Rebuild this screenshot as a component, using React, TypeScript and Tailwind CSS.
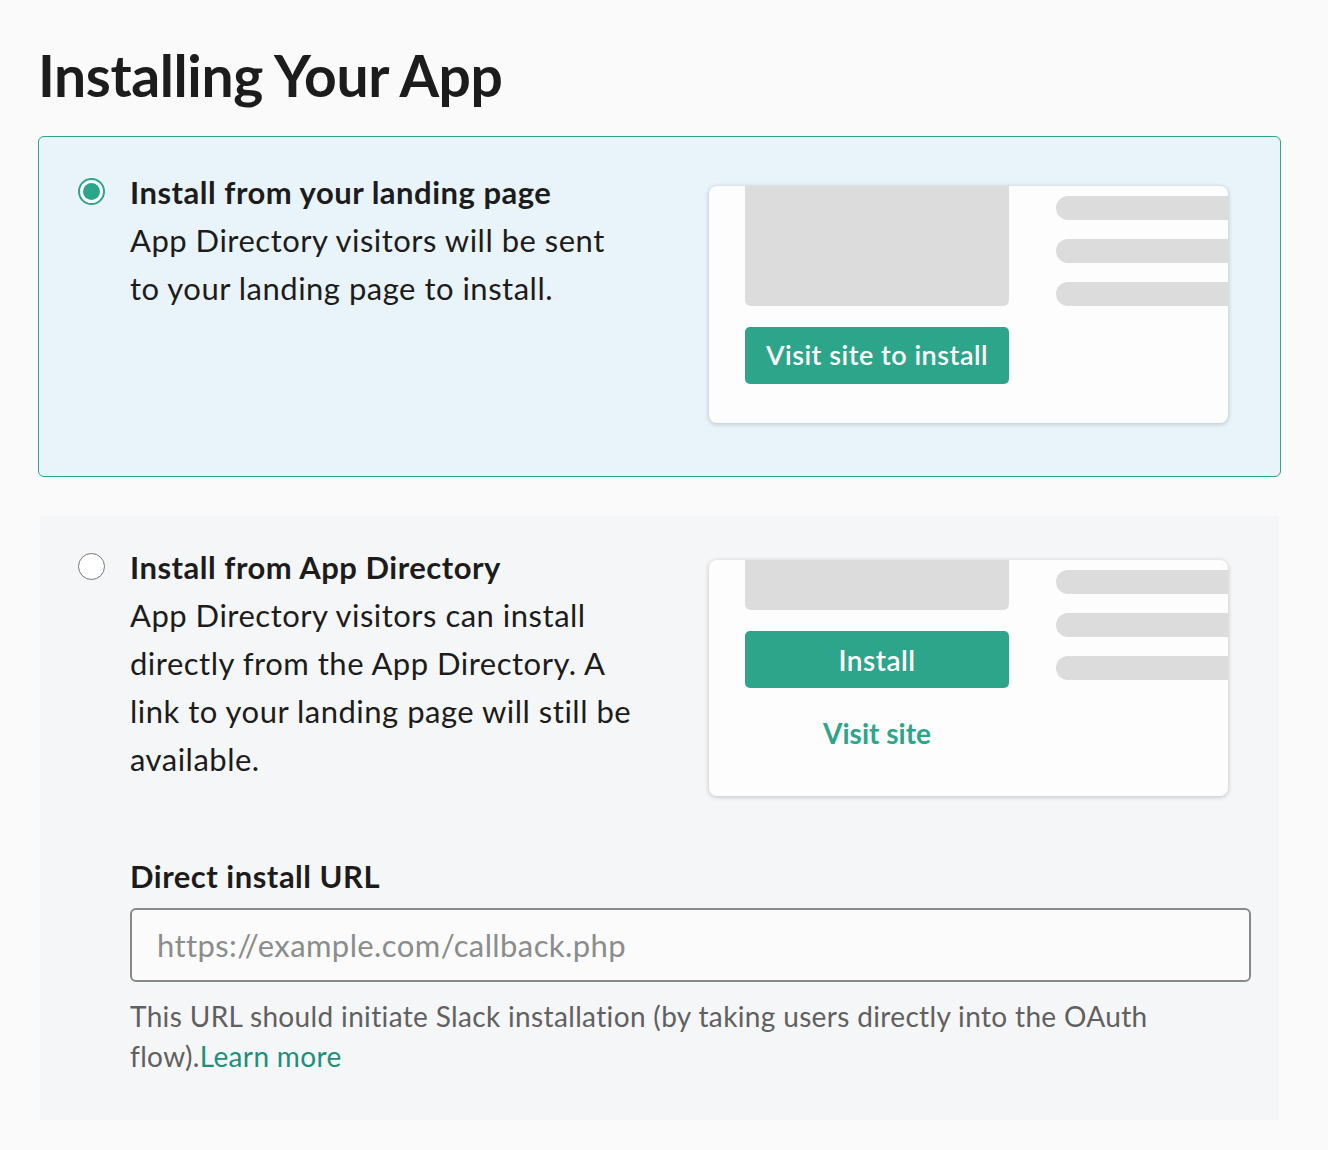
import React from 'react';

const TEAL = '#2ca58a';

function Radio({ checked }: { checked?: boolean }) {
  if (checked) {
    return (
      <div className="w-[27px] h-[27px] rounded-full border-[2px] border-[#2ca58a] bg-white flex items-center justify-center shrink-0">
        <div className="w-[17px] h-[17px] rounded-full bg-[#2ca58a]" />
      </div>
    );
  }
  return <div className="w-[27px] h-[27px] rounded-full border-[1.5px] border-[#777777] bg-white shrink-0" />;
}

function Lines({ top }: { top: string }) {
  return (
    <div className={`flex flex-col gap-[19px] ${top} pl-[47px]`}>
      <div className="h-[24px] rounded-l-full bg-[#dcdcdd]" />
      <div className="h-[24px] rounded-l-full bg-[#dcdcdd]" />
      <div className="h-[24px] rounded-l-full bg-[#dcdcdd]" />
    </div>
  );
}

export default function App() {
  return (
    <div className="min-h-[1150px] bg-[#fafafa] text-[#1d1c1d] font-['Lato','Noto_Sans',sans-serif] pl-[38px] pr-[47px] pt-[38px]">
      {/* title */}
      <h1 className="text-[57px] font-bold leading-[74px] tracking-[-0.4px]">Installing Your App</h1>

      {/* option 1 */}
      <div className="mt-[24px] h-[341px] rounded-[6px] border-[1.5px] border-[#2ca58a] bg-[#e8f4fa] flex pl-[39px] pt-[31px]">
        <div className="pt-[10px]">
          <Radio checked />
        </div>
        <div className="ml-[25px] w-[505px] shrink-0 text-[31px] leading-[48px] tracking-[0.5px]">
          <p className="font-bold">Install from your landing page</p>
          <p>App Directory visitors will be sent to your landing page to install.</p>
        </div>
        <div className="ml-[74px] mt-[18px] w-[519px] h-[237px] bg-[#fdfdfd] rounded-[8px] shadow-[0_1px_5px_rgba(0,0,0,0.22)] flex overflow-hidden">
          <div className="ml-[36px] w-[264px] flex flex-col">
            <div className="h-[120px] rounded-b-[6px] bg-[#dcdcdd]" />
            <div className="mt-[21px] h-[57px] rounded-[5px] bg-[#2ca58a] text-white text-[27px] tracking-[0.5px] font-semibold flex items-center justify-center">
              Visit site to install
            </div>
          </div>
          <div className="flex-1">
            <Lines top="pt-[10px]" />
          </div>
        </div>
      </div>

      {/* option 2 */}
      <div className="mt-[39px] mx-[2px] h-[604px] bg-[#f5f6f7] pl-[38px] pt-[27px]">
        <div className="flex">
          <div className="pt-[10px]">
            <Radio />
          </div>
          <div className="ml-[25px] w-[505px] shrink-0 text-[31px] leading-[48px] tracking-[0.5px]">
            <p className="font-bold">Install from App Directory</p>
            <p>App Directory visitors can install directly from the App Directory. A link to your landing page will still be available.</p>
          </div>
          <div className="ml-[74px] mt-[17px] w-[519px] h-[236px] bg-[#fdfdfd] rounded-[8px] shadow-[0_1px_5px_rgba(0,0,0,0.22)] flex overflow-hidden">
            <div className="ml-[36px] w-[264px] flex flex-col">
              <div className="h-[50px] rounded-b-[6px] bg-[#dcdcdd]" />
              <div className="mt-[21px] h-[57px] rounded-[5px] bg-[#2ca58a] text-white text-[28px] tracking-[0.5px] font-semibold flex items-center justify-center">
                Install
              </div>
              <div className="mt-[24px] text-center text-[28px] font-bold" style={{ color: TEAL }}>
                Visit site
              </div>
            </div>
            <div className="flex-1">
              <Lines top="pt-[10px]" />
            </div>
          </div>
        </div>

        <div className="ml-[52px] mt-[56px] mr-[28px]">
          <p className="text-[31px] font-bold leading-[48px] tracking-[0.5px]">Direct install URL</p>
          <div className="mt-[8px] h-[74px] rounded-[6px] border-2 border-[#868b89] bg-[#fbfbfb] flex items-center px-[25px]">
            <span className="text-[31px] tracking-[0.4px] text-[#8a8d8c]">https://example.com/callback.php</span>
          </div>
          <p className="mt-[14px] text-[28px] leading-[40px] tracking-[0.35px] text-[#616061]">
            This URL should initiate Slack installation (by taking users directly into the OAuth flow).<a className="text-[#1f8f7a]">Learn more</a>
          </p>
        </div>
      </div>
    </div>
  );
}
